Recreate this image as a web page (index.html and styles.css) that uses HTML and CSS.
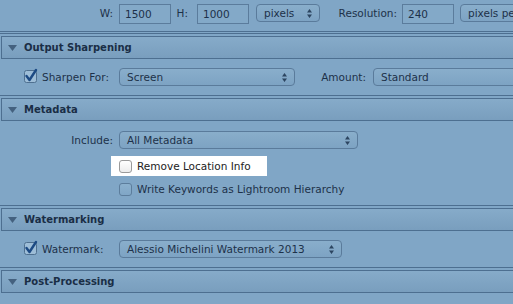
FILE: index.html
```html
<!DOCTYPE html>
<html lang="en">
<head>
    <meta charset="UTF-8">
    <title>Export - Output Settings</title>
    <link rel="stylesheet" href="styles.css">
</head>
<body>
    <div class="toprow">
        <span class="lbl lbl-w">W:</span>
        <span class="textbox">1500</span>
        <span class="lbl lbl-h">H:</span>
        <span class="textbox">1000</span>
        <span class="popup pop-unit">pixels <svg class="arr" width="5" height="9" viewBox="0 0 5 9"><path d="M2.5 0L5 3.5H0Z M2.5 9L5 5.5H0Z"/></svg></span>
        <span class="lbl lbl-res">Resolution:</span>
        <span class="textbox">240</span>
        <span class="popup pop-per">pixels per inch</span>
    </div>

    <div class="section first">
        <div class="sep"></div>
        <div class="head"><svg class="tri" width="9" height="6" viewBox="0 0 9 6"><path d="M0 0H9L4.5 6Z"/></svg>Output Sharpening</div>
        <div class="body">
            <div class="row">
                <div class="cell">
                    <svg class="cb" width="14" height="14" viewBox="0 0 14 14"><rect x="0.5" y="1.5" width="12" height="12" rx="2"/><path d="M2.5 7L5.5 11L12 1"/></svg>
                    Sharpen For:
                </div>
                <span class="popup pop-sharp">Screen <svg class="arr" width="5" height="9" viewBox="0 0 5 9"><path d="M2.5 0L5 3.5H0Z M2.5 9L5 5.5H0Z"/></svg></span>
                <span class="lbl lbl-amount">Amount:</span>
                <span class="popup pop-amount">Standard</span>
            </div>
        </div>
    </div>

    <div class="section">
        <div class="sep"></div>
        <div class="head"><svg class="tri" width="9" height="6" viewBox="0 0 9 6"><path d="M0 0H9L4.5 6Z"/></svg>Metadata</div>
        <div class="body meta">
            <div class="row">
                <div class="cell right">Include:</div>
                <span class="popup pop-include">All Metadata <svg class="arr" width="5" height="9" viewBox="0 0 5 9"><path d="M2.5 0L5 3.5H0Z M2.5 9L5 5.5H0Z"/></svg></span>
            </div>
            <div class="check highlight">
                <span class="box"></span>Remove Location Info
            </div>
            <div class="check">
                <span class="box"></span>Write Keywords as Lightroom Hierarchy
            </div>
        </div>
    </div>

    <div class="section">
        <div class="sep"></div>
        <div class="head"><svg class="tri" width="9" height="6" viewBox="0 0 9 6"><path d="M0 0H9L4.5 6Z"/></svg>Watermarking</div>
        <div class="body">
            <div class="row">
                <div class="cell">
                    <svg class="cb" width="14" height="14" viewBox="0 0 14 14"><rect x="0.5" y="1.5" width="12" height="12" rx="2"/><path d="M2.5 7L5.5 11L12 1"/></svg>
                    Watermark:
                </div>
                <span class="popup pop-water">Alessio Michelini Watermark 2013 <svg class="arr" width="5" height="9" viewBox="0 0 5 9"><path d="M2.5 0L5 3.5H0Z M2.5 9L5 5.5H0Z"/></svg></span>
            </div>
        </div>
    </div>

    <div class="section">
        <div class="sep"></div>
        <div class="head"><svg class="tri" width="9" height="6" viewBox="0 0 9 6"><path d="M0 0H9L4.5 6Z"/></svg>Post-Processing</div>
    </div>
</body>
</html>
```

FILE: styles.css
```css
html, body {
    width: 513px;
    height: 304px;
    overflow: hidden;
}
body {
    margin: 0;
    background: #80a6c6;
    font-family: "DejaVu Sans", sans-serif;
    font-size: 10.5px;
    color: #1d3149;
}
.toprow {
    display: flex;
    align-items: flex-start;
    height: 32px;
    padding-top: 4px;
    box-sizing: border-box;
    border-bottom: 1px solid #4d6f90;
    white-space: nowrap;
}
.lbl {
    text-align: right;
    flex-shrink: 0;
    line-height: 19px;
}
.lbl-w {
    width: 113px;
    margin-right: 6px;
}
.lbl-h {
    width: 17px;
    margin-right: 9px;
}
.lbl-res {
    width: 77px;
    margin-right: 5px;
}
.lbl-amount {
    width: 71px;
    margin-right: 7px;
    line-height: 18px;
}
.textbox {
    box-sizing: border-box;
    width: 52px;
    height: 20px;
    flex-shrink: 0;
    border: 1px solid #5b7c9c;
    background: #83a9c8;
    padding-left: 5px;
    line-height: 18px;
}
.popup {
    box-sizing: border-box;
    height: 18px;
    flex-shrink: 0;
    border: 1px solid #5a7b9b;
    border-radius: 4px;
    background: linear-gradient(#89aecb, #7da3c3);
    display: flex;
    align-items: center;
    justify-content: space-between;
    padding: 0 7px;
    white-space: nowrap;
}
.arr {
    fill: #2c4560;
}
.pop-unit {
    width: 64px;
    margin-left: 7px;
}
.pop-per {
    width: 110px;
    margin-left: 6px;
}
.pop-sharp {
    width: 176px;
}
.pop-amount {
    width: 160px;
}
.pop-include {
    width: 239px;
}
.pop-water {
    width: 223px;
}
.sep {
    height: 1px;
    background: #4d6f90;
    margin-bottom: 2px;
}
.section.first {
    margin-top: 1px;
}
.head {
    margin-left: 1px;
    height: 23px;
    box-sizing: border-box;
    border: 1px solid #4d6f90;
    border-right: none;
    background: linear-gradient(#86abc9, #799ebe);
    display: flex;
    align-items: center;
    gap: 7px;
    padding-left: 6px;
    font-weight: bold;
    font-size: 10px;
    color: #1a2e46;
}
.tri {
    fill: #44617f;
}
.body {
    box-sizing: border-box;
    height: 36px;
    padding: 9px 0 0 24px;
}
.body.meta {
    height: 84px;
    padding-top: 10px;
}
.row {
    display: flex;
    align-items: center;
    height: 18px;
    white-space: nowrap;
}
.cell {
    width: 95px;
    flex-shrink: 0;
    display: flex;
    align-items: center;
    gap: 4px;
}
.cell.right {
    justify-content: flex-end;
    padding-right: 6px;
    box-sizing: border-box;
}
.cb {
    overflow: visible;
    margin-top: -2px;
}
.cb rect {
    fill: #9dbdd7;
    stroke: #4f7090;
}
.cb path {
    fill: none;
    stroke: #1c4a84;
    stroke-width: 2.4;
    stroke-linecap: round;
    stroke-linejoin: round;
}
.check {
    display: flex;
    align-items: center;
    gap: 5px;
    height: 20px;
    margin-left: 95px;
    margin-top: 3px;
    white-space: nowrap;
}
.check .box {
    width: 13px;
    height: 13px;
    box-sizing: border-box;
    border: 1px solid #5c7d9c;
    border-radius: 3px;
    background: linear-gradient(#8bb0cd, #80a6c6);
}
.highlight {
    margin-left: 87px;
    margin-top: 7px;
    width: 156px;
    padding-left: 8px;
    box-sizing: border-box;
    background: #ffffff;
    color: #222222;
}
.highlight .box {
    border-color: #9a9a9a;
    background: linear-gradient(#ffffff, #ececec);
}
```
